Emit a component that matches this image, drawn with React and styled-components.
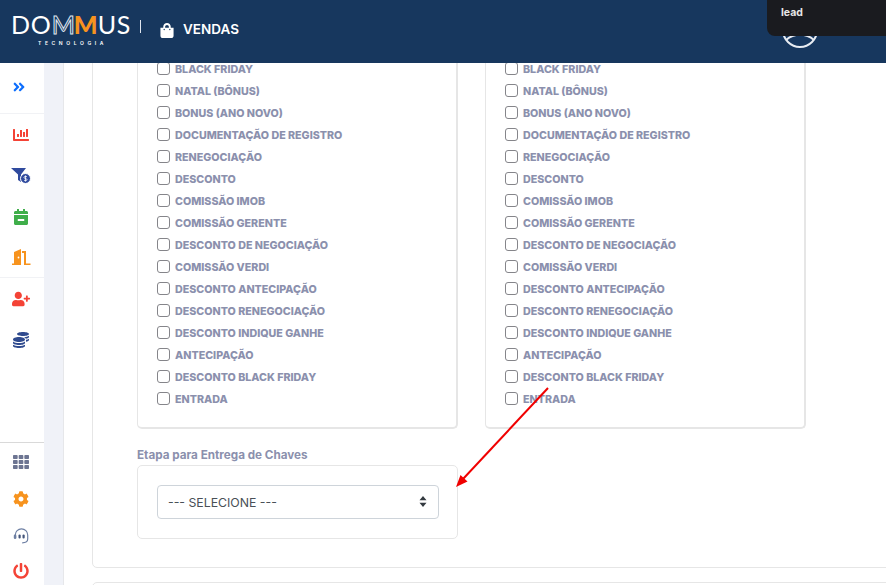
import styled, { createGlobalStyle } from "styled-components";
import {
  FaAngleDoubleRight,
  FaChartBar,
  FaCalendarMinus,
  FaUserPlus,
  FaCoins,
  FaTh,
  FaCog,
  FaPowerOff,
  FaShoppingBag,
} from "react-icons/fa";

const GlobalStyle = createGlobalStyle`
  html, body, #root {
    margin: 0;
    height: 100%;
  }
  body {
    font-family: "Inter", "Liberation Sans", sans-serif;
    background: #fff;
    overflow: hidden;
  }
`;

const Page = styled.div`
  position: relative;
  width: 886px;
  height: 585px;
  overflow: hidden;
  display: flex;
  flex-direction: column;
`;

const Header = styled.header`
  height: 63px;
  flex: none;
  background-color: #17375e;
  display: flex;
  align-items: flex-start;
  color: #fff;
  position: relative;
  z-index: 2;
`;

const Logo = styled.div`
  width: 129px;
  margin: 10px 0 0 11px;
  display: flex;
  flex-direction: column;
  align-items: flex-start;
`;

const LogoWord = styled.div`
  font-family: "Lato", sans-serif;
  font-size: 25px;
  line-height: 28px;
  font-weight: 400;
  letter-spacing: 0.8px;
  white-space: nowrap;
`;

const OutlineM = styled.span`
  color: transparent;
  -webkit-text-stroke: 1px #dfe5ee;
  letter-spacing: -1px;
`;

const OrangeM = styled.span`
  color: #f7931e;
  font-weight: 900;
  letter-spacing: 0;
`;

const LogoSub = styled.div`
  font-size: 5px;
  line-height: 6px;
  letter-spacing: 3.6px;
  margin: 2px 0 0 27px;
  font-weight: 600;
`;

const HeaderDivider = styled.div`
  width: 1px;
  height: 13px;
  background: #dfe5ee;
  margin: 20px 19px 0 0;
`;

const ModuleName = styled.div`
  display: flex;
  align-items: center;
  gap: 9px;
  height: 18px;
  margin-top: 20px;
  font-size: 13.5px;
  font-weight: 600;

  svg {
    width: 14px;
    height: 15px;
    margin-top: 2px;
  }
`;

const Tooltip = styled.div`
  position: absolute;
  top: 0;
  right: 0;
  width: 119px;
  height: 36px;
  box-sizing: border-box;
  padding: 6px 0 0 14px;
  background: #1a1b1f;
  border-bottom-left-radius: 8px;
  color: #e6e6e6;
  font-size: 10.5px;
  line-height: 14px;
  font-weight: 700;
  z-index: 3;
`;

const Avatar = styled.svg`
  position: absolute;
  top: 12px;
  left: 782px;
`;

const Body = styled.div`
  flex: 1;
  min-height: 0;
  display: flex;
`;

const Sidebar = styled.nav`
  width: 44px;
  flex: none;
  display: flex;
  flex-direction: column;
  justify-content: space-between;
  background: #fff;
`;

const SideTop = styled.div`
  display: flex;
  flex-direction: column;
`;

const SideGroup = styled.div`
  display: flex;
  flex-direction: column;
  border-top: 1px solid #f1f2f5;
`;

const SideBottom = styled.div`
  border-top: 1px solid #d9d9d9;
  display: flex;
  flex-direction: column;
`;

const SideItem = styled.div`
  height: ${(p) => p.$h || 41}px;
  display: flex;
  align-items: center;
  justify-content: center;
  padding: ${(p) => p.$pad || "0 2px 0 0"};
  box-sizing: border-box;
  color: ${(p) => p.$color};
  font-size: ${(p) => p.$size || 16}px;
`;

const Gutter = styled.div`
  width: 20px;
  flex: none;
  background: #f0f2f8;
  border-right: 1px solid #e6e7ea;
  box-sizing: border-box;
`;

const Main = styled.main`
  flex: 1;
  min-width: 0;
  overflow: hidden;
  padding-left: 28px;
`;

const Card = styled.section`
  width: 830px;
  box-sizing: border-box;
  margin-top: -21px;
  padding: 0 0 28px 44px;
  border: 1px solid #e6e6e6;
  border-radius: 5px;
`;

const NextCard = styled.section`
  width: 830px;
  height: 40px;
  box-sizing: border-box;
  margin-top: 14px;
  border: 1px solid #e6e6e6;
  border-radius: 5px;
`;

const Columns = styled.div`
  display: flex;
  gap: 27px;
`;

const Panel = styled.div`
  width: 321px;
  box-sizing: border-box;
  padding: 15px 18px 17px 19px;
  border-style: solid;
  border-color: #e6e6e6;
  border-width: 0 2px 2px 1px;
  border-radius: 0 0 5px 5px;
`;

const Row = styled.label`
  height: 22px;
  display: flex;
  align-items: center;
  gap: 5px;
`;

const Box = styled.span`
  width: 13px;
  height: 13px;
  box-sizing: border-box;
  flex: none;
  border: 1.5px solid #85858a;
  border-radius: 3px;
  background: #fff;
  margin-top: -2px;
`;

const RowText = styled.span`
  font-size: 10.7px;
  font-weight: 800;
  color: #8b90ad;
  white-space: nowrap;
`;

const StepLabel = styled.div`
  margin: 19px 0 2px;
  font-size: 11.7px;
  line-height: 15px;
  font-weight: 700;
  color: #8b90ad;
`;

const StepPanel = styled.div`
  width: 321px;
  height: 74px;
  box-sizing: border-box;
  padding: 19px 18px 0 19px;
  border: 1px solid #e6e6e6;
  border-radius: 5px;
`;

const SelectBox = styled.div`
  position: relative;
  height: 34px;
  box-sizing: border-box;
  border: 1px solid #ced4da;
  border-radius: 4px;
  padding-left: 10px;
  display: flex;
  align-items: center;
  font-size: 12.3px;
  color: #495057;
  background: #fff;
`;

const Updown = styled.svg`
  position: absolute;
  right: 11px;
  top: 10px;
`;

const ArrowLayer = styled.svg`
  position: absolute;
  left: 0;
  top: 0;
  pointer-events: none;
  z-index: 1;
`;

const labels = [
  "BLACK FRIDAY",
  "NATAL (BÔNUS)",
  "BONUS (ANO NOVO)",
  "DOCUMENTAÇÃO DE REGISTRO",
  "RENEGOCIAÇÃO",
  "DESCONTO",
  "COMISSÃO IMOB",
  "COMISSÃO GERENTE",
  "DESCONTO DE NEGOCIAÇÃO",
  "COMISSÃO VERDI",
  "DESCONTO ANTECIPAÇÃO",
  "DESCONTO RENEGOCIAÇÃO",
  "DESCONTO INDIQUE GANHE",
  "ANTECIPAÇÃO",
  "DESCONTO BLACK FRIDAY",
  "ENTRADA",
];

const FunnelIcon = () => (
  <svg width="20" height="16" viewBox="0 0 20 16">
    <path d="M0 0h15l-5 6.500V14l-3-2V6.500z" fill="#2f4a9e" />
    <circle cx="14.500" cy="10.500" r="5" fill="#2f4a9e" stroke="#fff" strokeWidth="1" />
    <path d="M16 8.800c-1-.7-3-.6-3 .7 0 1.500 3 .6 3 2.100 0 1.200-2 1.300-3 .6M14.500 7.500v6" fill="none" stroke="#fff" strokeWidth=".8" />
  </svg>
);

const DoorIcon = () => (
  <svg width="19" height="16" viewBox="0 0 19 16">
    <path d="M0 16v-1.500h2V3l7-3v16z" fill="#f7931e" />
    <path d="M10 2h4v12.500h4.500V16H12V4h-2z" fill="#f7931e" />
    <circle cx="6.500" cy="8.500" r=".9" fill="#fff" />
  </svg>
);

const HeadsetIcon = () => (
  <svg width="17" height="16" viewBox="0 0 17 16" fill="none">
    <path d="M2.300 8V7a6.200 6.200 0 0 1 12.400 0V11c0 2.500-2 3.800-5.500 3.800" stroke="#6d7fa3" strokeWidth="1.200" />
    <rect x="0.800" y="6.500" width="2.600" height="4.500" rx="1.300" fill="#6d7fa3" />
    <rect x="5.500" y="6.500" width="2.200" height="4" rx="1.100" fill="#44557a" />
    <rect x="9.500" y="6.500" width="2.200" height="4" rx="1.100" fill="#44557a" />
  </svg>
);

const CheckList = () => (
  <Panel>
    {labels.map((label) => (
      <Row key={label}>
        <Box />
        <RowText>{label}</RowText>
      </Row>
    ))}
  </Panel>
);

const App = () => {
  return (
    <Page>
      <GlobalStyle />
      <Header>
        <Logo>
          <LogoWord>
            DO<OutlineM>M</OutlineM>
            <OrangeM>M</OrangeM>US
          </LogoWord>
          <LogoSub>TECNOLOGIA</LogoSub>
        </Logo>
        <HeaderDivider />
        <ModuleName>
          <FaShoppingBag />
          VENDAS
        </ModuleName>
        <Avatar width="36" height="36" viewBox="0 0 36 36" fill="none" stroke="#e8ecf2" strokeWidth="2">
          <circle cx="18" cy="18" r="17" />
          <path d="M4 28c8-7 20-7 28 0" />
        </Avatar>
        <Tooltip>lead</Tooltip>
      </Header>
      <Body>
        <Sidebar>
          <SideTop>
            <SideItem $h={50} $color="#0d6efd" $size={14} $pad="0 6px 2px 0">
              <FaAngleDoubleRight />
            </SideItem>
            <SideGroup>
              <SideItem $color="#f44336"><FaChartBar /></SideItem>
              <SideItem><FunnelIcon /></SideItem>
              <SideItem $color="#3fae4a"><FaCalendarMinus /></SideItem>
              <SideItem $h={40}><DoorIcon /></SideItem>
            </SideGroup>
            <SideGroup>
              <SideItem $color="#f44336" $size={18}><FaUserPlus /></SideItem>
              <SideItem $color="#2f4a8e"><FaCoins /></SideItem>
            </SideGroup>
          </SideTop>
          <SideBottom>
            <SideItem $h={37} $color="#6d7592"><FaTh /></SideItem>
            <SideItem $h={37} $color="#f7931e"><FaCog /></SideItem>
            <SideItem $h={37}><HeadsetIcon /></SideItem>
            <SideItem $h={31} $pad="3px 2px 0 0" $color="#f44336"><FaPowerOff /></SideItem>
          </SideBottom>
        </Sidebar>
        <Gutter />
        <Main>
          <Card>
            <Columns>
              <CheckList />
              <CheckList />
            </Columns>
            <StepLabel>Etapa para Entrega de Chaves</StepLabel>
            <StepPanel>
              <SelectBox>
                --- SELECIONE ---
                <Updown width="8" height="11" viewBox="0 0 8 11">
                  <path d="M4 0l3.500 4.300h-7zM4 11L.5 6.700h7z" fill="#343a40" />
                </Updown>
              </SelectBox>
            </StepPanel>
          </Card>
          <NextCard />
        </Main>
      </Body>
      <ArrowLayer width="886" height="585" viewBox="0 0 886 585">
        <path d="M548 388L463 479" stroke="#f00000" strokeWidth="2" fill="none" />
        <path d="M456 487l4.500-12 7 6.500z" fill="#f00000" />
      </ArrowLayer>
    </Page>
  );
};

export default App;
